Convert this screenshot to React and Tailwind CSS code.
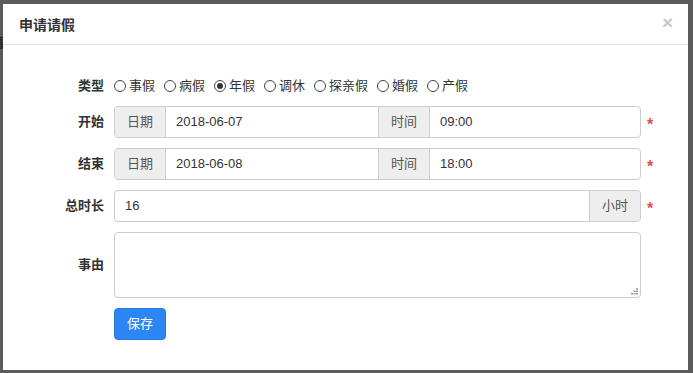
import React from "react";

const font = { fontFamily: '"Liberation Sans", "Noto Sans CJK SC", sans-serif' };

function Radio({ label, checked }) {
  return (
    <label className="flex items-center mr-[9px]">
      <span className="w-[12px] h-[12px] rounded-full border border-[#444] flex items-center justify-center bg-white">
        {checked && <span className="w-[6px] h-[6px] rounded-full bg-[#333]" />}
      </span>
      <span className="ml-[3px] text-[13px] text-[#333] leading-none">{label}</span>
    </label>
  );
}

function Addon({ children, w, last }) {
  return (
    <div
      className={`${w} shrink-0 bg-[#eeeeee] text-[#555] text-[13px] flex items-center justify-center ${last ? "border-l" : "border-r"} border-[#ccc]`}
    >
      {children}
    </div>
  );
}

function Field({ children, w, leftBorder }) {
  return (
    <div className={`${w} flex items-center pl-[10px] text-[13px] text-[#333] ${leftBorder ? "border-l border-[#ccc]" : ""}`}>
      {children}
    </div>
  );
}

function Star() {
  return <span className="ml-[6px] text-[#d9534f] text-[16px] font-bold leading-none pt-[5px]">*</span>;
}

function Label({ children }) {
  return <div className="w-[60px] shrink-0 text-right pr-0 text-[13px] font-bold text-[#333] mr-[10px]">{children}</div>;
}

export default function App() {
  return (
    <div className="relative w-[693px] h-[373px] bg-[#5b5b5b] pt-[4px] pl-[3px] overflow-hidden" style={font}>
      <span className="absolute left-[-9px] top-[33px] text-[13px] text-[#222] font-bold">请</span>
      <div className="relative z-10 w-[685px] h-[366px] bg-white">
        <div className="h-[41px] border-b border-[#e5e5e5] flex items-center justify-between pl-[16px] pr-[15px]">
          <span className="text-[14px] font-bold text-[#333] pt-[2px]">申请请假</span>
          <span className="text-[#c8c8c8] text-[19px] font-bold leading-none pb-[4px]">×</span>
        </div>
        <div className="pl-[41px] pt-[30px] flex flex-col gap-[10px]">
          <div className="flex items-center h-[21px]">
            <Label>类型</Label>
            <div className="flex items-center">
              <Radio label="事假" />
              <Radio label="病假" />
              <Radio label="年假" checked />
              <Radio label="调休" />
              <Radio label="探亲假" />
              <Radio label="婚假" />
              <Radio label="产假" />
            </div>
          </div>

          <div className="flex items-center">
            <Label>开始</Label>
            <div className="w-[527px] h-[32px] border border-[#ccc] rounded-[4px] flex overflow-hidden">
              <Addon w="w-[51px]">日期</Addon>
              <Field w="w-[212px]">2018-06-07</Field>
              <Addon w="w-[51px]" last>时间</Addon>
              <Field w="flex-1" leftBorder>09:00</Field>
            </div>
            <Star />
          </div>

          <div className="flex items-center">
            <Label>结束</Label>
            <div className="w-[527px] h-[32px] border border-[#ccc] rounded-[4px] flex overflow-hidden">
              <Addon w="w-[51px]">日期</Addon>
              <Field w="w-[212px]">2018-06-08</Field>
              <Addon w="w-[51px]" last>时间</Addon>
              <Field w="flex-1" leftBorder>18:00</Field>
            </div>
            <Star />
          </div>

          <div className="flex items-center">
            <Label>总时长</Label>
            <div className="w-[527px] h-[32px] border border-[#ccc] rounded-[4px] flex overflow-hidden">
              <Field w="flex-1">16</Field>
              <Addon w="w-[51px]" last>小时</Addon>
            </div>
            <Star />
          </div>

          <div className="flex items-center">
            <Label>事由</Label>
            <div className="relative w-[527px] h-[66px]">
              <textarea
                className="w-full h-full border border-[#ccc] rounded-[4px] resize-none outline-none block"
                defaultValue=""
              />
              <svg className="absolute right-[3px] bottom-[3px]" width="7" height="7" viewBox="0 0 7 7">
                <rect x="5" y="0" width="2" height="1.5" fill="#999" />
                <rect x="2.5" y="2.5" width="2" height="1.5" fill="#999" />
                <rect x="5" y="2.5" width="2" height="1.5" fill="#999" />
                <rect x="0" y="5" width="2" height="1.5" fill="#999" />
                <rect x="2.5" y="5" width="2" height="1.5" fill="#999" />
                <rect x="5" y="5" width="2" height="1.5" fill="#999" />
              </svg>
            </div>
          </div>

          <div className="flex items-center">
            <div className="w-[70px] shrink-0" />
            <button className="w-[52px] h-[32px] rounded-[4px] bg-[#2d86f6] border border-[#2a78de] text-white text-[13px]">
              保存
            </button>
          </div>
        </div>
      </div>
    </div>
  );
}
